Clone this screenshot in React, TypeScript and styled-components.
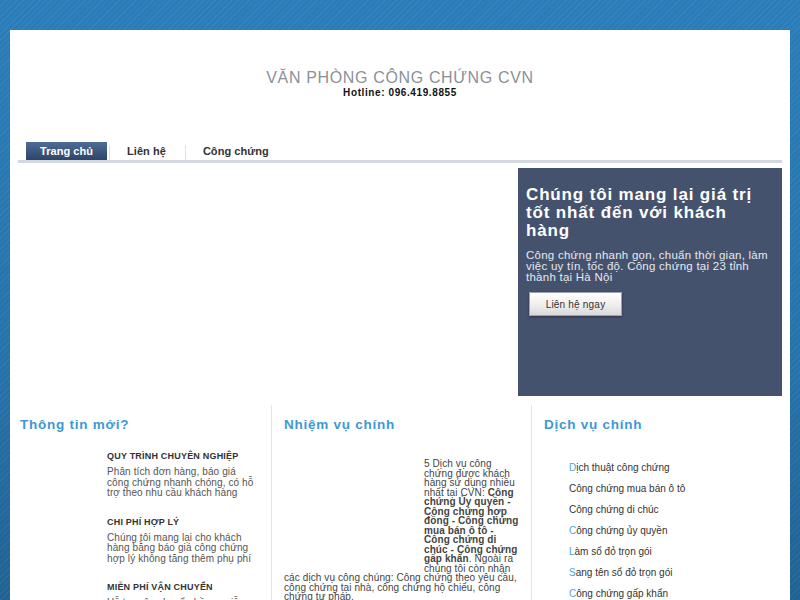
import React from "react";
import styled, { createGlobalStyle } from "styled-components";

const Global = createGlobalStyle`
  html, body { margin: 0; padding: 0; }
  body {
    font-family: "Liberation Sans", Arial, sans-serif;
    background-color: #2877b0;
    background-image:
      repeating-linear-gradient(135deg, rgba(255,255,255,0.05) 0 1px, rgba(0,0,0,0) 1px 4px),
      linear-gradient(180deg, #2b7dba 0%, #2673ab 55%, #1f5e8e 100%);
    min-height: 600px;
    overflow: hidden;
  }
`;

const Page = styled.div`
  padding: 30px 10px 0 10px;
`;

const Container = styled.div`
  background: #fff;
  width: 780px;
  min-height: 620px;
`;

const Header = styled.header`
  height: 112px;
  display: flex;
  flex-direction: column;
  align-items: center;
  padding-top: 39px;
  box-sizing: border-box;
`;

const SiteTitle = styled.h1`
  margin: 0;
  font-weight: normal;
  font-size: 16px;
  line-height: 18px;
  color: #8b9097;
  letter-spacing: 0.65px;
`;

const Hotline = styled.div`
  font-size: 10px;
  font-weight: bold;
  color: #111;
  line-height: 12px;
  letter-spacing: 0.6px;
`;

const NavWrap = styled.div`
  padding: 0 8px;
`;

const Nav = styled.nav`
  display: flex;
  align-items: stretch;
  height: 18px;
  padding-left: 8px;
  border-bottom: 3px solid #d3d8de;
`;

const NavItem = styled.a<{ $active?: boolean; $sep?: boolean }>`
  display: flex;
  align-items: center;
  padding: 0 ${(p) => (p.$active ? "14px" : "17px")};
  font-size: 11px;
  font-weight: bold;
  letter-spacing: 0.05px;
  text-decoration: none;
  color: ${(p) => (p.$active ? "#fff" : "#333")};
  background: ${(p) =>
    p.$active ? "linear-gradient(180deg, #4d6c96 0%, #2d4569 100%)" : "transparent"};
  border-left: ${(p) => (p.$sep ? "1px solid #dde2e7" : "none")};
  margin-left: ${(p) => (p.$sep ? "2px" : "0")};
  margin-top: ${(p) => (p.$sep ? "3px" : "0")};
  padding-bottom: ${(p) => (p.$sep ? "3px" : "0")};
`;

const Hero = styled.section`
  display: flex;
  justify-content: flex-end;
  padding: 5px 8px 0 8px;
`;

const HeroBox = styled.div`
  width: 264px;
  height: 228px;
  background: #45526e;
  box-sizing: border-box;
  padding: 18px 12px 0 8px;
  color: #fff;
`;

const HeroTitle = styled.h2`
  margin: 0;
  font-size: 17px;
  line-height: 18px;
  font-weight: bold;
  letter-spacing: 0.85px;
`;

const HeroText = styled.p`
  margin: 10px 0 0 0;
  font-size: 11.5px;
  line-height: 11px;
  color: #e6e9ef;
  letter-spacing: 0.25px;
`;

const HeroButton = styled.button`
  margin: 9px 0 0 3px;
  width: 93px;
  height: 24px;
  border: 1px solid #9ea4ad;
  background: linear-gradient(180deg, #ffffff 0%, #ececec 60%, #d8d8d8 100%);
  box-shadow: 0 1px 2px rgba(0,0,0,0.4);
  font-family: "Liberation Sans", Arial, sans-serif;
  font-size: 10px;
  letter-spacing: 0.2px;
  color: #333;
  cursor: pointer;
`;

const Columns = styled.section`
  display: grid;
  grid-template-columns: 261px 260px 259px;
  margin-top: 9px;
`;

const Column = styled.div<{ $border?: boolean; $right?: number }>`
  border-left: ${(p) => (p.$border ? "1px solid #e2e5e8" : "none")};
  padding: 12px ${(p) => p.$right ?? 8}px 0 ${(p) => (p.$border ? "12px" : "10px")};
  min-height: 200px;
`;

const ColTitle = styled.h3`
  margin: 0;
  font-size: 13.5px;
  line-height: 16px;
  font-weight: bold;
  color: #3d98d6;
  letter-spacing: 0.75px;
`;

const NewsList = styled.div`
  display: flex;
  flex-direction: column;
  gap: 17px;
  margin-top: 17px;
`;

const NewsItem = styled.div`
  display: grid;
  grid-template-columns: 87px 1fr;
`;

const NewsThumb = styled.div``;

const NewsBody = styled.div`
  display: flex;
  flex-direction: column;
  gap: 5px;
`;

const NewsTitle = styled.div`
  font-size: 9px;
  line-height: 12px;
  font-weight: bold;
  color: #333;
  text-transform: uppercase;
  letter-spacing: 0.2px;
`;

const NewsDesc = styled.div`
  font-size: 10px;
  line-height: 10.5px;
  color: #555;
  letter-spacing: 0.1px;
`;

const MissionText = styled.div`
  margin-top: 26px;
  font-size: 10px;
  line-height: 9.5px;
  color: #444;
  letter-spacing: 0.1px;
`;

const FloatBlock = styled.div`
  float: left;
  width: 140px;
  height: 112px;
`;

const ServiceList = styled.ul`
  list-style: none;
  margin: 29px 0 0 0;
  padding: 0 0 0 25px;
  display: flex;
  flex-direction: column;
  gap: 9px;
`;

const ServiceItem = styled.li<{ $accent?: boolean }>`
  font-size: 10px;
  line-height: 12px;
  color: #333;
  &::first-letter {
    color: ${(p) => (p.$accent ? "#4fa3de" : "#333")};
  }
`;

const news = [
  {
    title: "Quy trình chuyên nghiệp",
    desc: "Phân tích đơn hàng, báo giá công chứng nhanh chóng, có hỗ trợ theo nhu cầu khách hàng",
  },
  {
    title: "Chi phí hợp lý",
    desc: "Chúng tôi mang lại cho khách hàng bằng báo giá công chứng hợp lý không tăng thêm phụ phí",
  },
  {
    title: "Miễn phí vận chuyển",
    desc: "Hỗ trợ vận chuyển hồ sơ miễn phí tận nơi cho khách hàng",
  },
];

const services = [
  { name: "Dịch thuật công chứng", accent: true },
  { name: "Công chứng mua bán ô tô", accent: false },
  { name: "Công chứng di chúc", accent: false },
  { name: "Công chứng ủy quyền", accent: true },
  { name: "Làm sổ đỏ trọn gói", accent: true },
  { name: "Sang tên sổ đỏ trọn gói", accent: true },
  { name: "Công chứng gấp khẩn", accent: true },
];

export default function App() {
  return (
    <>
      <Global />
      <Page>
        <Container>
          <Header>
            <SiteTitle>VĂN PHÒNG CÔNG CHỨNG CVN</SiteTitle>
            <Hotline>Hotline: 096.419.8855</Hotline>
          </Header>
          <NavWrap>
            <Nav>
              <NavItem $active href="#">Trang chủ</NavItem>
              <NavItem $sep href="#">Liên hệ</NavItem>
              <NavItem $sep href="#">Công chứng</NavItem>
            </Nav>
          </NavWrap>
          <Hero>
            <HeroBox>
              <HeroTitle>Chúng tôi mang lại giá trị tốt nhất đến với khách hàng</HeroTitle>
              <HeroText>
                Công chứng nhanh gọn, chuẩn thời gian, làm việc uy tín, tốc độ. Công chứng tại 23 tỉnh thành tại Hà Nội
              </HeroText>
              <HeroButton>Liên hệ ngay</HeroButton>
            </HeroBox>
          </Hero>
          <Columns>
            <Column $right={16}>
              <ColTitle>Thông tin mới?</ColTitle>
              <NewsList>
                {news.map((n) => (
                  <NewsItem key={n.title}>
                    <NewsThumb />
                    <NewsBody>
                      <NewsTitle>{n.title}</NewsTitle>
                      <NewsDesc>{n.desc}</NewsDesc>
                    </NewsBody>
                  </NewsItem>
                ))}
              </NewsList>
            </Column>
            <Column $border $right={9}>
              <ColTitle>Nhiệm vụ chính</ColTitle>
              <MissionText>
                <FloatBlock />
                5 Dịch vụ công chứng được khách hàng sử dụng nhiều nhất tại CVN:{" "}
                <strong>
                  Công chứng Ủy quyền - Công chứng hợp đồng - Công chứng mua bán ô tô - Công chứng di chúc - Công chứng gấp khẩn
                </strong>
                . Ngoài ra chúng tôi còn nhận các dịch vụ công chúng: Công chứng theo yêu cầu, công chứng tại nhà, công chứng hộ chiếu, công chứng tư pháp.
              </MissionText>
            </Column>
            <Column $border>
              <ColTitle>Dịch vụ chính</ColTitle>
              <ServiceList>
                {services.map((s) => (
                  <ServiceItem key={s.name} $accent={s.accent}>
                    {s.name}
                  </ServiceItem>
                ))}
              </ServiceList>
            </Column>
          </Columns>
        </Container>
      </Page>
    </>
  );
}
